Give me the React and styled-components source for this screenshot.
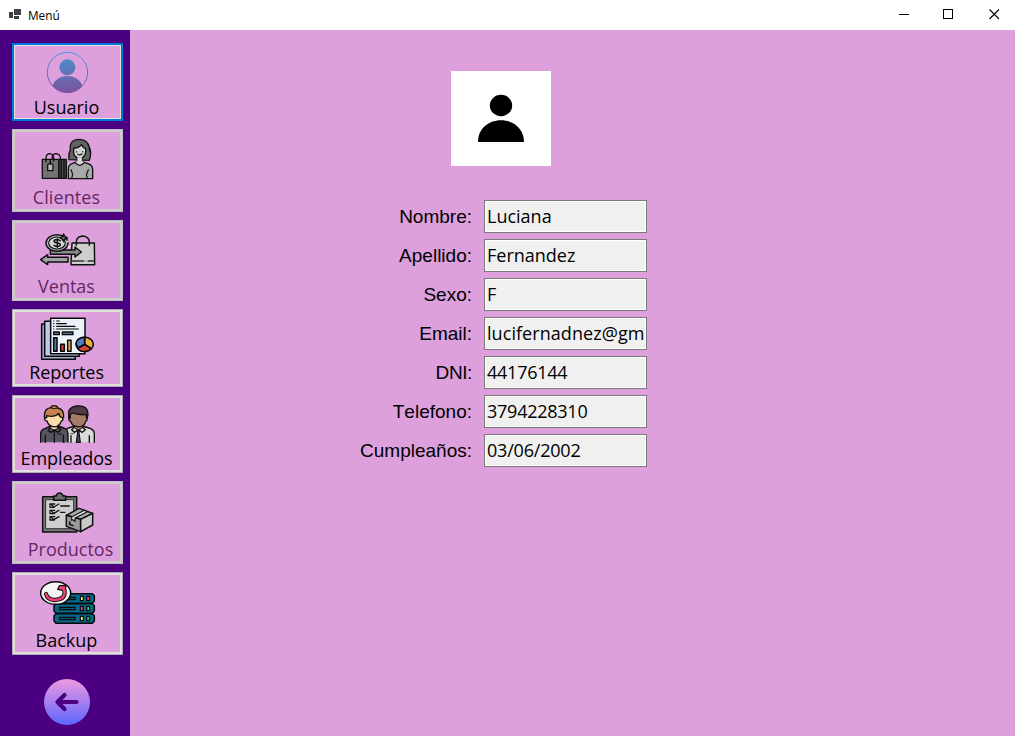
import React from "react";
import styled, { createGlobalStyle } from "styled-components";

const GlobalStyle = createGlobalStyle`
  * { box-sizing: border-box; }
  html, body, #root { height: 100%; }
  body { margin: 0; overflow: hidden; background: #dda0dd; }
`;

const ui = `"Open Sans", "Noto Sans", sans-serif`;

const Window = styled.div`
  display: flex;
  flex-direction: column;
  width: 1015px;
  height: 736px;
  font-family: ${ui};
  color: #000;
`;

const TitleBar = styled.header`
  display: flex;
  align-items: center;
  height: 30px;
  flex: none;
  padding-left: 9px;
  background: #fff;
`;

const AppIcon = styled.svg`
  width: 12px;
  height: 12px;
  flex: none;
`;

const Title = styled.span`
  flex: 1;
  margin-left: 7px;
  padding-bottom: 1px;
  font-size: 11.8px;
  line-height: 16px;
`;

const WindowControl = styled.svg`
  width: 45.5px;
  height: 30px;
  fill: none;
  stroke: #000;
`;

const Body = styled.div`
  display: flex;
  flex: 1;
  min-height: 0;
`;

const Sidebar = styled.nav`
  display: flex;
  flex-direction: column;
  align-items: flex-start;
  gap: 8px;
  width: 130px;
  flex: none;
  padding: 13px 0 0 12px;
  background: #4b0082;
`;

const frames = {
  focused: ["#0078d7", "#0078d7", "#e1e1e1"],
  enabled: ["#adadad", "#e1e1e1", "#e1e1e1"],
  disabled: ["#bfbfbf", "#cccccc", "#cccccc"],
};

const MenuButton = styled.button`
  display: flex;
  flex-direction: column;
  justify-content: space-between;
  align-items: center;
  width: 111px;
  height: ${(p) => p.$height}px;
  padding: 3px 3px ${(p) => (p.$state === "focused" ? 4 : 5)}px;
  border: 0;
  background: #dda0dd;
  box-shadow:
    inset 0 0 0 1px ${(p) => frames[p.$state][0]},
    inset 0 0 0 2px ${(p) => frames[p.$state][1]},
    inset 0 0 0 3px ${(p) => frames[p.$state][2]};
  color: ${(p) => (p.$state === "disabled" ? "#642864" : "#000")};
`;

const Picture = styled.svg`
  display: block;
  width: 105px;
  height: 50px;
  flex: none;
  stroke-linejoin: round;
  stroke-linecap: round;
`;

const MenuLabel = styled.span`
  font-family: ${ui};
  font-size: 18px;
  line-height: 20px;
  letter-spacing: ${(p) => p.$spacing || 0}px;
  padding-left: ${(p) => p.$indent || 0}px;
  padding-right: ${(p) => (p.$indent ? 0 : 2)}px;
  white-space: nowrap;
`;

const BackButton = styled.button`
  width: 46px;
  height: 46px;
  margin: 16px 0 0 32px;
  padding: 0;
  border: 0;
  background: none;

  svg { display: block; }
`;

const Content = styled.main`
  flex: 1;
  padding: 41px 0 0 230px;
  background: #dda0dd;
`;

const Avatar = styled.div`
  width: 100px;
  height: 95px;
  margin-left: 91px;
  background: #fff;

  svg { display: block; }
`;

const Form = styled.div`
  display: grid;
  grid-template-columns: 112px 163px;
  grid-auto-rows: 33px;
  column-gap: 12px;
  row-gap: 6px;
  margin-top: 34px;
`;

const FieldLabel = styled.label`
  justify-self: end;
  font-family: "Liberation Sans", Arial, sans-serif;
  font-size: 19px;
  line-height: 33px;
  white-space: nowrap;
  font-kerning: none;
  letter-spacing: ${(p) => p.$spacing || 0}px;
`;

const Field = styled.div`
  overflow: hidden;
  border: 1px solid #7a7a7a;
  background: #f0f0f0;
  box-shadow: inset 0 0 0 1px #fff;
  padding: 0 2px;
  line-height: 31px;
`;

const FieldText = styled.div`
  overflow: hidden;
  font-size: 18px;
  letter-spacing: ${(p) => p.$spacing || 0}px;
  white-space: nowrap;
`;

function UserArt() {
  return (
    <Picture viewBox="45 138 315 150">
      <defs>
        <linearGradient id="user" gradientUnits="userSpaceOnUse" x1="0" y1="156" x2="0" y2="279">
          <stop offset="0" stopColor="#4596d4" />
          <stop offset="1" stopColor="#7b529f" />
        </linearGradient>
        <clipPath id="userClip"><circle cx="202.500" cy="217.500" r="60" /></clipPath>
      </defs>
      <circle cx="202.500" cy="217.500" r="60.500" fill="none" stroke="url(#user)" strokeWidth="3" />
      <circle cx="202" cy="202" r="24" fill="url(#user)" />
      <ellipse cx="202" cy="269" rx="47" ry="41" fill="url(#user)" clipPath="url(#userClip)" />
    </Picture>
  );
}

function ClientsArt() {
  return (
    <Picture viewBox="45 36 315 150" stroke="#111" strokeWidth="4" fill="none">
      <path d="M207 119Q205 100 211 91V76Q214 58 238 58Q263 59 268 82Q276 98 268 121Z" fill="#626262" />
      <path d="M205 176V147Q205 134 218 130L232 125V111H246V125L264 131Q278 136 278 149V176Z" fill="#a8a8a8" />
      <path d="M221 84Q236 85 245 74Q249 84 257 86V96Q255 113 239 115Q222 113 221 98Z" fill="#d4d4d4" />
      <path d="M226 127Q239 145 253 127L246 123V112H232V123Z" fill="#d4d4d4" stroke="none" />
      <path d="M226 128Q239 144 253 128" />
      <path d="M230 95v1M248 95v1M233 103Q240 107 246 102M213 149L218 163L215 175M265 149L259 164L262 175" strokeWidth="3.500" />
      <path d="M127 118H177V175H127Z" fill="#737373" />
      <path d="M177 118H199V175H177ZM184 119V174M192 119V174" fill="#4b4b4b" />
      <path d="M138 126V114Q139 101 149 101Q160 102 161 115V123M156 117Q157 101 168 101Q181 102 182 117" />
      <path d="M143 134L151 128L159 134V152H143Z" fill="#b4b4b4" />
      <path d="M151 118V133M267 86Q274 90 270 95" />
    </Picture>
  );
}

function SalesArt() {
  return (
    <Picture viewBox="45 24 315 150" stroke="#111" strokeWidth="4.400" fill="none">
      <path d="M216 84H283L284 149H213Z" fill="#cecece" />
      <path d="M214 138H284" stroke="#333" />
      <path d="M229 91V79Q231 64 249 63Q266 65 268 80V91" />
      <path d="M155 105H225V96L244 111L225 126V118H151V105Z" fill="#8a8a8a" />
      <path d="M204 127H143V119L122 134L143 149V141H204Z" fill="#a3a3a3" />
      <ellipse cx="171" cy="84" rx="33" ry="25" fill="#bdbdbd" />
      <ellipse cx="171" cy="84" rx="25" ry="18" fill="#d7d7d7" strokeWidth="3.500" />
      <path d="M181 77Q169 70 162 77Q163 84 173 84Q184 86 180 92Q172 98 162 91M172 71V97" strokeWidth="4.500" />
      <path d="M191 57Q192 67 202 68Q192 70 191 80Q189 70 180 68Q190 67 191 57Z" fill="#888" />
      <path d="M203 79v1M207 94v4" stroke="#fff" />
      <path d="M253 138h9" stroke="#cecece" />
    </Picture>
  );
}

function ReportsArt() {
  return (
    <Picture viewBox="45 27 315 150" stroke="#080808" strokeWidth="4.500" fill="none">
      <path d="M125 63H226V169H125Z" fill="#a7b1d1" />
      <path d="M134 55H238V160H134Z" fill="#bec9eb" />
      <path d="M152 46H255V152H152Z" fill="#edf2fa" />
      <path d="M161 54h1M161 62h1M161 70h1M161 78h1M170 54H178M170 62H199M170 70H225M170 78H235" strokeWidth="3.600" />
      <path d="M161 87H178V95H161ZM187 87H219V95H187Z" fill="#527ba4" strokeWidth="4" />
      <path d="M161 104H171V145H161Z" fill="#4776ae" />
      <path d="M182 124H193V145H182Z" fill="#d33c3c" />
      <path d="M203 112H213V145H203Z" fill="#f2aa44" />
      <ellipse cx="254" cy="124" rx="26" ry="21" fill="#f3ae42" />
      <path d="M254 124V103C240 103 228 111 228 124L235 135Z" fill="#4f7ec5" />
      <path d="M254 124L233 136C241 149 263 148 274 137Z" fill="#d64438" />
      <path d="M254 103V124L274 137M254 124L233 136" />
    </Picture>
  );
}

function EmployeesArt() {
  return (
    <Picture viewBox="45 24 315 150" stroke="#111" strokeWidth="4" fill="none">
      <path d="M193 157V130Q193 118 206 114L224 108H247L267 114Q283 118 283 132V157" fill="#dadada" />
      <path d="M122 157V130Q122 119 136 115L151 108H174L192 114Q204 119 204 132V157" fill="#575461" />
      <path d="M133 81Q132 55 153 53Q153 47 162 47Q173 47 173 54Q192 57 191 81L186 86H138Z" fill="#c8834d" />
      <path d="M153 54Q163 59 173 54" strokeWidth="3" />
      <path d="M140 77Q164 83 176 70Q177 79 186 83Q190 84 188 91L184 93Q179 109 164 111Q146 110 141 93Q132 93 135 84L140 83Z" fill="#ffdda9" />
      <path d="M152 110V115L163 121L173 115V110L164 111Z" fill="#ffdda9" strokeWidth="3" />
      <path d="M149 113L145 122L153 127L163 120L174 127L182 120L175 111M163 120V157M136 136V157M190 136V157" />
      <path d="M206 83V65Q210 50 230 48Q264 44 264 75L261 85Z" fill="#513c46" />
      <path d="M211 75Q214 66 226 71Q243 76 259 73V83Q263 85 261 91L257 94Q254 110 235 111Q216 109 212 94Q205 92 207 83L211 84Z" fill="#a77c64" />
      <path d="M223 109V113L235 121L248 113V109L235 111Z" fill="#a77c64" strokeWidth="3" />
      <path d="M222 112L215 119L223 127L235 120L247 127L256 119L248 112" fill="none" />
      <path d="M231 121H239L237 128L241 157H229L233 128Z" fill="#4b4855" strokeWidth="3.500" />
      <path d="M213 137V157M268 137V157" />
      <path d="M212 131H222" stroke="#555" strokeWidth="3" />
      <path d="M174 132H185" stroke="#111" strokeWidth="3" />
    </Picture>
  );
}

function ProductsArt() {
  return (
    <Picture viewBox="45 24 315 150" stroke="#111" strokeWidth="4.500" fill="none">
      <path d="M128 62H230V168H128Z" fill="#777" />
      <path d="M138 71H221V158H138Z" fill="#cecece" stroke="#333" strokeWidth="3" />
      <path d="M161 73V60H168Q171 51 179 51Q187 51 189 60H197V73Z" fill="#6c6c6c" />
      <path d="M164 84H150V94H163M155 87L161 93L177 84M182 90H208M164 103H150V113H163M155 106L161 112L177 103M182 109H195M164 122H150V132H163M155 125L161 131L177 122" strokeWidth="3.800" />
      <path d="M199 118L237 97L278 112L242 130Z" fill="#aaa" />
      <path d="M199 118L242 130V167L199 151Z" fill="#999" />
      <path d="M242 130L278 112V147L242 167Z" fill="#c9c9c9" />
      <path d="M215 123L253 103L262 107L225 126V136L219 131L215 133Z" fill="#eee" strokeWidth="3.500" />
      <path d="M209 138V145L219 149" />
    </Picture>
  );
}

function BackupArt() {
  return (
    <Picture viewBox="45 27 315 150" stroke="#090909" strokeWidth="4.500" fill="none">
      {[83, 113, 143].map((y, i) => (
        <g key={y}>
          <path d={`M168 ${y}H277L283 ${y + 6}V${y + 22}L277 ${y + 29}H168L162 ${y + 22}V${y + 6}Z`} fill="#08688a" />
          <path d={`M178 ${y + 11}H226V${y + 18}H178Z`} fill="#006078" strokeWidth="3.500" />
          <path d={`M241 ${y + 8}H250V${y + 21}H241Z`} fill={i === 1 ? "#ef4378" : "#f5ef55"} strokeWidth="3.500" />
          <path d={`M260 ${y + 8}H269V${y + 21}H260Z`} fill={i === 0 ? "#ef4378" : "#16cd83"} strokeWidth="3.500" />
        </g>
      ))}
      <ellipse cx="167" cy="81" rx="45" ry="34" fill="#f7f4f6" />
      <path d="M138 84Q142 101 164 102Q194 101 194 79Q194 72 190 68" stroke="#111" strokeWidth="13" />
      <path d="M173 70L178 59L198 58L196 78L188 73Z" fill="#ef4378" strokeWidth="3.500" />
      <path d="M138 84Q142 101 164 102Q194 101 194 79Q194 72 188 67" stroke="#ef4378" strokeWidth="7.500" />
    </Picture>
  );
}

const menu = [
  { label: "Usuario", art: UserArt, height: 78, state: "focused" },
  { label: "Clientes", art: ClientsArt, height: 83, state: "disabled", spacing: 0.1 },
  { label: "Ventas", art: SalesArt, height: 81, state: "disabled" },
  { label: "Reportes", art: ReportsArt, height: 78, state: "enabled", spacing: -0.1 },
  { label: "Empleados", art: EmployeesArt, height: 78, state: "enabled", spacing: -0.1 },
  { label: "Productos", art: ProductsArt, height: 83, state: "disabled", indent: 6 },
  { label: "Backup", art: BackupArt, height: 83, state: "enabled" },
];

const fields = [
  { label: "Nombre:", value: "Luciana" },
  { label: "Apellido:", value: "Fernandez" },
  { label: "Sexo:", value: "F" },
  { label: "Email:", value: "lucifernadnez@gmail.com", spacing: 0.06 },
  { label: "DNI:", value: "44176144", spacing: -0.25, labelSpacing: -0.4 },
  { label: "Telefono:", value: "3794228310", spacing: -0.25 },
  { label: "Cumpleaños:", value: "03/06/2002", spacing: -0.2 },
];

export default function App() {
  return (
    <>
      <GlobalStyle />
      <Window>
        <TitleBar>
          <AppIcon viewBox="0 0 12 12" fill="#404040" shapeRendering="crispEdges">
            <path d="M0 3H4V9H0ZM5 -1H12V6H5ZM5 7H10V10H5Z" />
          </AppIcon>
          <Title>Menú</Title>
          <WindowControl viewBox="0 0 45.500 30" shapeRendering="crispEdges"><path d="M19.500 14.500H29.500" /></WindowControl>
          <WindowControl viewBox="0 0 45.500 30" shapeRendering="crispEdges"><path d="M19.500 9.500H28.500V18.500H19.500Z" /></WindowControl>
          <WindowControl viewBox="0 0 45.500 30"><path d="M19.500 9.500L29 19M29 9.500L19.500 19" strokeWidth="1.100" /></WindowControl>
        </TitleBar>
        <Body>
          <Sidebar>
            {menu.map(({ label, art: Art, height, state, spacing, indent }) => (
              <MenuButton key={label} $height={height} $state={state} disabled={state === "disabled"}>
                <Art />
                <MenuLabel $spacing={spacing} $indent={indent}>{label}</MenuLabel>
              </MenuButton>
            ))}
            <BackButton aria-label="Volver">
              <svg width="46" height="46" viewBox="0 0 46 46">
                <defs>
                  <linearGradient id="back" x1="0" y1="0" x2="0" y2="1">
                    <stop offset="0" stopColor="#f099e0" />
                    <stop offset="1" stopColor="#5b66ff" />
                  </linearGradient>
                </defs>
                <circle cx="23" cy="23" r="23" fill="url(#back)" />
                <path d="M32.500 23H14M20.500 16L13.500 23L20.500 30" fill="none" stroke="#4b0082" strokeWidth="4.200" strokeLinecap="round" strokeLinejoin="round" />
              </svg>
            </BackButton>
          </Sidebar>
          <Content>
            <Avatar>
              <svg width="100" height="95" viewBox="0 0 100 95">
                <ellipse cx="50" cy="34.500" rx="11.200" ry="10.700" />
                <path d="M27 71C27 58 37 49.300 50 49.300S73 58 73 71Z" />
              </svg>
            </Avatar>
            <Form>
              {fields.map(({ label, value, spacing, labelSpacing }) => (
                <React.Fragment key={label}>
                  <FieldLabel $spacing={labelSpacing}>{label}</FieldLabel>
                  <Field><FieldText $spacing={spacing}>{value}</FieldText></Field>
                </React.Fragment>
              ))}
            </Form>
          </Content>
        </Body>
      </Window>
    </>
  );
}
